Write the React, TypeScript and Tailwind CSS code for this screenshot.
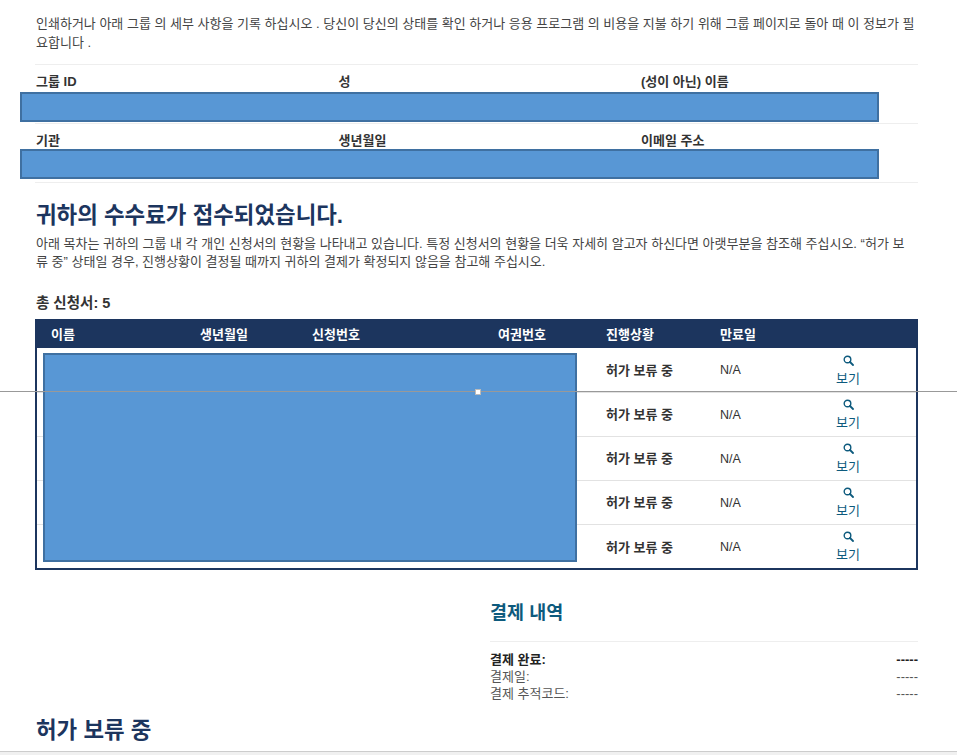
const rows = [1, 2, 3, 4, 5];

function SearchIcon() {
  return (
    <svg width="11" height="11" viewBox="0 0 11 11" fill="none" className="mx-auto block">
      <circle cx="4.5" cy="4.5" r="3.3" stroke="#0d5a7d" strokeWidth="1.4" />
      <path d="M7 7L10 10" stroke="#0d5a7d" strokeWidth="1.8" strokeLinecap="round" />
    </svg>
  );
}

function Field({ label }: { label: string }) {
  return <div className="w-[302.5px] shrink-0 text-[13px] font-bold leading-[18px] text-[#333]">{label}</div>;
}

export default function App() {
  return (
    <div className="relative h-[755px] w-[957px] overflow-hidden bg-white font-['Liberation_Sans','Noto_Sans_CJK_KR',sans-serif] text-[#333]">
      <div className="ml-[35px] w-[883px] pt-[14px]">
        <p className="pl-px text-[13px] leading-[19px] text-[#444]">
          인쇄하거나 아래 그룹 의 세부 사항을 기록 하십시오 . 당신이 당신의 상태를 확인 하거나 응용 프로그램 의 비용을 지불 하기 위해 그룹 페이지로 돌아 때 이 정보가 필요합니다 .
        </p>

        {/* Group info */}
        <div className="mt-[12px] h-[59px] border-t border-[#eee] pl-px pt-[8px]">
          <div className="flex">
            <Field label="그룹 ID" />
            <Field label="성" />
            <Field label="(성이 아닌) 이름" />
          </div>
        </div>
        <div className="h-[59px] border-t border-[#eee] pl-px pt-[8px]">
          <div className="flex">
            <Field label="기관" />
            <Field label="생년월일" />
            <Field label="이메일 주소" />
          </div>
        </div>

        <div className="border-t border-[#eee] pl-px pt-[20px]">
          <h2 className="text-[22.4px] font-bold leading-[26px] text-[#1c355e]">귀하의 수수료가 접수되었습니다.</h2>
          <p className="mt-[6px] pr-[5px] text-[13px] leading-[18px] text-[#444]">
            아래 목차는 귀하의 그룹 내 각 개인 신청서의 현황을 나타내고 있습니다. 특정 신청서의 현황을 더욱 자세히 알고자 하신다면 아랫부분을 참조해 주십시오. “허가 보류 중” 상태일 경우, 진행상황이 결정될 때까지 귀하의 결제가 확정되지 않음을 참고해 주십시오.
          </p>
        </div>

        <div className="mt-[23px] pl-px text-[14.5px] font-bold leading-[18px] text-[#333]">총 신청서: 5</div>

        {/* Applications table */}
        <table className="mt-[7px] w-[883px] table-fixed border-collapse border-2 border-[#1c355e] text-[13px]">
          <colgroup>
            <col className="w-[150px]" />
            <col className="w-[112px]" />
            <col className="w-[186px]" />
            <col className="w-[108px]" />
            <col className="w-[114px]" />
            <col className="w-[74px]" />
            <col />
          </colgroup>
          <thead>
            <tr className="h-[28px] bg-[#1c355e] text-left text-white">
              <th className="pl-[14px] font-bold">이름</th>
              <th className="pl-[14px] font-bold">생년월일</th>
              <th className="pl-[14px] font-bold">신청번호</th>
              <th className="pl-[14px] font-bold">여권번호</th>
              <th className="pl-[14px] font-bold">진행상황</th>
              <th className="pl-[14px] font-bold">만료일</th>
              <th />
            </tr>
          </thead>
          <tbody>
            {rows.map((r) => (
              <tr key={r} className="h-[44px] border-b border-[#e2e2e2] last:h-[45px] last:border-b-0">
                <td />
                <td />
                <td />
                <td />
                <td className="pl-[14px] pt-[2px] font-bold text-[#333]">허가 보류 중</td>
                <td className="pl-[14px] pt-[2px] text-[12.5px] text-[#333]">N/A</td>
                <td className="pt-[2px] text-center leading-[16px] text-[#0d5a7d]">
                  <SearchIcon />
                  <span className="mt-[5px] block">보기</span>
                </td>
              </tr>
            ))}
          </tbody>
        </table>

        {/* Payment details */}
        <div className="ml-[455px] mt-[31px]">
          <h3 className="text-[18.5px] font-bold leading-[24px] text-[#0d5a7d]">결제 내역</h3>
          <div className="mt-[16px] flex justify-between border-t border-[#eee] pt-[9px] text-[13px] font-bold leading-[17px] text-[#222]">
            <span>결제 완료:</span>
            <span>-----</span>
          </div>
          <div className="flex justify-between text-[13px] leading-[17px] text-[#555]">
            <span>결제일:</span>
            <span>-----</span>
          </div>
          <div className="flex justify-between text-[13px] leading-[17px] text-[#555]">
            <span>결제 추적코드:</span>
            <span>-----</span>
          </div>
        </div>

        <h2 className="mt-[15px] pl-px text-[22.4px] font-bold leading-[28px] text-[#1c355e]">허가 보류 중</h2>
      </div>

      {/* Redaction boxes drawn on top of the page */}
      <div className="absolute left-[20px] top-[92px] h-[30px] w-[859px] border-2 border-[#3f70a1] bg-[#5897d5]" />
      <div className="absolute left-[20px] top-[149px] h-[30px] w-[859px] border-2 border-[#3f70a1] bg-[#5897d5]" />
      <div className="absolute left-[43px] top-[353px] h-[209px] w-[534px] border-2 border-[#3f70a1] bg-[#5897d5]" />

      {/* Guide line and handle */}
      <div className="absolute left-0 top-[391px] h-px w-full bg-[#999]" />
      <div className="absolute left-[475px] top-[389px] h-[6px] w-[6px] border border-[#bbb] bg-white" />

      {/* Bottom bar */}
      <div className="absolute bottom-0 left-0 h-[4px] w-full border-t border-[#ccc] bg-[#f0f0f0]" />
    </div>
  );
}
